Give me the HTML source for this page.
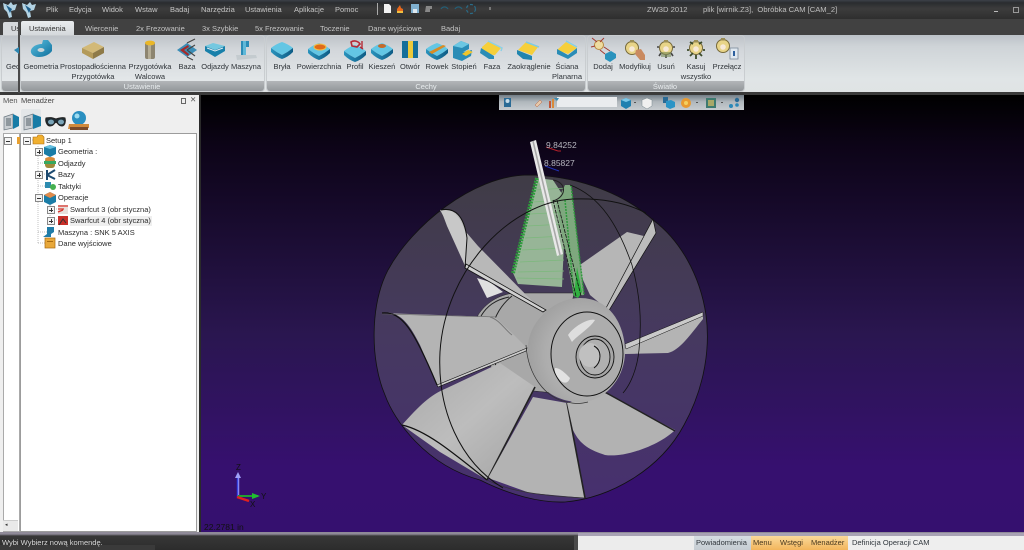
<!DOCTYPE html>
<html><head><meta charset="utf-8"><style>
html,body{margin:0;padding:0;width:1024px;height:550px;overflow:hidden;background:#2b2b2b}
#r{position:relative;width:1024px;height:550px;overflow:hidden;font-family:"Liberation Sans",sans-serif;filter:blur(.35px)}
.a{position:absolute}
.t{position:absolute;white-space:nowrap;font-size:7.5px;line-height:9.5px}
.m{color:#c4c4c4;top:5px}
.tb{color:#c2c2c2}
.c{transform:translateX(-50%);text-align:center;color:#2e3338}
.g{color:#e8ecee;top:82px;transform:translateX(-50%)}
.tr{color:#2b2b2b}
svg{position:absolute;overflow:visible}
.pn{position:absolute;top:36px;height:55px;border-radius:3px;background:linear-gradient(#bfc4c9 0,#d3d7db 25%,#e3e7e9 80%);box-shadow:0 0 0 1px #c9cdd0}
.gb{position:absolute;left:0;right:0;bottom:0;height:10px;background:linear-gradient(#b3b6b9,#93979b);border-radius:0 0 3px 3px}
.pm{position:absolute;width:6px;height:6px;border:1px solid #888;background:#f4f4f4}
.pm:before{content:"";position:absolute;left:1px;top:2.5px;width:4px;height:1px;background:#333}
.pl:after{content:"";position:absolute;left:2.5px;top:1px;width:1px;height:4px;background:#333}
</style></head><body><div id="r">

<!-- title bar -->
<div class="a" style="left:0;top:0;width:1024px;height:19px;background:linear-gradient(#3c4148 0,#2a2c2f 15%,#3c3c3c 45%,#2e2e2e 100%)"></div>
<div class="a" style="left:0;top:19px;width:1024px;height:17px;background:#414141"></div>
<svg style="left:0;top:0" width="40" height="18" viewBox="0 0 40 18">
<path d="M3 3l5 2 3-3 2 3 4-1-2 6-4 1 1 6-3 1-2-6-3-3zM22 3l5 2 3-3 2 3 4-1-2 6-4 1 1 6-3 1-2-6-3-3z" fill="#b2d3e4"/>
<path d="M6 5l6 4-2 4zM25 5l6 4-2 4z" fill="#1f5f8c"/></svg>
<div class="t m" style="left:46px">Plik</div>
<div class="t m" style="left:69px">Edycja</div>
<div class="t m" style="left:102px">Widok</div>
<div class="t m" style="left:135px">Wstaw</div>
<div class="t m" style="left:170px">Badaj</div>
<div class="t m" style="left:201px">Narzędzia</div>
<div class="t m" style="left:245px">Ustawienia</div>
<div class="t m" style="left:294px">Aplikacje</div>
<div class="t m" style="left:335px">Pomoc</div>
<svg style="left:360px;top:0" width="130" height="18" viewBox="0 0 130 18">
<rect x="17" y="3" width="1" height="12" fill="#aaa"/>
<path d="M24 4h5l2 2v7h-7z" fill="#f2f2f2"/>
<path d="M37 9l3-4 1 3 2 1v4h-6z" fill="#e8691c"/><rect x="37" y="11" width="6" height="2" fill="#f0c040"/>
<rect x="51" y="4" width="8" height="9" fill="#7fb0d0"/><rect x="53" y="9" width="4" height="4" fill="#dfe8ee"/>
<path d="M66 6h6v3h-2v3h-5z" fill="#888"/>
<path d="M81 9a4 4 0 0 1 7 0M95 9a4 4 0 0 1 7 0" stroke="#23607a" stroke-width="1.2" fill="none"/>
<circle cx="111" cy="9" r="4.5" stroke="#2a6c88" stroke-width="1.2" fill="none" stroke-dasharray="3 2"/>
<rect x="129" y="7" width="2" height="3" fill="#777"/></svg>
<div class="t" style="left:647px;top:5px;color:#bdbdbd;font-size:7.6px">ZW3D 2012</div>
<div class="t" style="left:703px;top:5px;color:#bdbdbd;font-size:7.6px">plik [wirnik.Z3],&nbsp; Obróbka CAM [CAM_2]</div>
<div class="a" style="left:994px;top:11px;width:4px;height:1px;background:#bbb"></div>
<div class="a" style="left:1013px;top:7px;width:4px;height:4px;border:1px solid #999"></div>

<!-- tabs -->
<div class="a" style="left:3px;top:22px;width:17px;height:14px;background:#d6d9dc;border-radius:2px 2px 0 0"></div>
<div class="t" style="left:11px;top:24px;color:#333">Us</div>
<div class="a" style="left:21px;top:21px;width:53px;height:15px;background:linear-gradient(#e9ecee,#d3d7da);border-radius:2px 2px 0 0"></div>
<div class="t" style="left:29px;top:24px;color:#333">Ustawienia</div>
<div class="t tb" style="left:85px;top:24px">Wiercenie</div>
<div class="t tb" style="left:136px;top:24px">2x Frezowanie</div>
<div class="t tb" style="left:202px;top:24px">3x Szybkie</div>
<div class="t tb" style="left:255px;top:24px">5x Frezowanie</div>
<div class="t tb" style="left:320px;top:24px">Toczenie</div>
<div class="t tb" style="left:368px;top:24px">Dane wyjściowe</div>
<div class="t tb" style="left:441px;top:24px">Badaj</div>

<!-- ribbon -->
<div class="a" style="left:0;top:35px;width:1024px;height:58px;background:linear-gradient(#bcc2c8 0,#cfd4d8 20%,#e0e5e6 75%,#dfe3e4 100%)"></div>
<div class="a" style="left:0;top:92px;width:1024px;height:3px;background:#3a3a3a"></div>
<div class="pn" style="left:2px;width:17px"><div class="gb"></div></div>
<div class="a" style="left:18px;top:21px;width:2px;height:72px;background:#4a4a4a"></div>
<div class="pn" style="left:21px;width:243px"><div class="gb"></div></div>
<div class="pn" style="left:267px;width:318px"><div class="gb"></div></div>
<div class="pn" style="left:588px;width:156px"><div class="gb"></div></div>
<div class="t g" style="left:142px">Ustawienie</div>
<div class="t g" style="left:426px">Cechy</div>
<div class="t g" style="left:665px">Światło</div>

<svg style="left:0;top:36px" width="760" height="30" viewBox="0 36 760 30">
<defs>
<linearGradient id="b1" x1="0" y1="0" x2="1" y2="1"><stop offset="0" stop-color="#5cc0e0"/><stop offset="1" stop-color="#0f6f9c"/></linearGradient>
<linearGradient id="b2" x1="0" y1="0" x2="1" y2="0"><stop offset="0" stop-color="#2a93bd"/><stop offset="1" stop-color="#0e5c85"/></linearGradient>
<g id="box"><path d="M-11 -2Q-6 -6 0 -8Q6 -6 11 -2Q6 2 0 5Q-6 2 -11 -2z" fill="#63c6e4"/><path d="M-11 -2Q-6 2 0 5Q6 2 11 -2V2Q6 7 0 9Q-6 7 -11 2z" fill="url(#b2)"/></g>
<g id="bulb"><circle cx="0" cy="-2" r="6.5" fill="#e8d488" stroke="#776a3a" stroke-width="1"/><circle cx="0" cy="-1" r="2.8" fill="#f7e9d8"/><rect x="-2" y="-10" width="4" height="2.5" fill="#9a8d55"/></g>
</defs>
<!-- Geo peek -->
<path d="M14 50l5-3v7z" fill="#2b86b1"/>
<!-- Geometria -->
<path d="M31 50c2-5 8-6 11-6l1-4h5l4 5v6c-3 4-8 6-13 6-5 0-9-3-8-7z" fill="url(#b1)"/><ellipse cx="41" cy="50" rx="3.5" ry="2" fill="#c9d4d8"/>
<!-- Prostopadl -->
<g transform="translate(93,50)"><path d="M-11 -2L1 -8 11 -3 0 3z" fill="#d2b978"/><path d="M-11 -2L0 3V9L-11 3z" fill="#b39a5a"/><path d="M11 -3L0 3V9L11 3z" fill="#8e7a48"/></g>
<!-- Walcowa -->
<rect x="145" y="42" width="10" height="17" rx="2" fill="#8d8570"/><rect x="148" y="43" width="3" height="16" fill="#b5ad95"/><ellipse cx="150" cy="43" rx="5" ry="2.4" fill="#eab728"/>
<!-- Baza -->
<path d="M177 50l10-7 10 7-10 7z" fill="#3b8db6"/><path d="M187 43l8-4M187 57l6 3M187 50l8-5M187 50l8 6" stroke="#444" stroke-width="1.1" fill="none"/><path d="M180 50l8-5 1 2-5 3 5 4-1 2z" fill="#a52a2a"/>
<!-- Odjazdy -->
<g transform="translate(215,49)"><path d="M-10 -3L-2 -6 10 -3 0 1z" fill="#74c8e0"/><path d="M-10 -3L0 1 10 -3V2L0 8-10 2z" fill="#1880aa"/><path d="M-8 -1L0 2 8 -1" stroke="#dfeaf0" fill="none"/></g>
<!-- Maszyna -->
<path d="M241 41h8v6h-3v9h-5z" fill="#2b8bb6"/><path d="M236 55l20 -0l1 3-20 2z" fill="#c4cbcf"/><path d="M243 41h3v14h-3z" fill="#5fb8d8"/>
<use href="#box" x="282" y="50"/>
<!-- Powierzchnia -->
<use href="#box" x="319" y="51"/><ellipse cx="320" cy="47" rx="6" ry="3" fill="#e06a18" stroke="#f0c04a"/>
<!-- Profil -->
<use href="#box" x="355" y="53"/><path d="M351 42c3-2 7-1 9 2l-3 3-5-1z" fill="none" stroke="#b52a36" stroke-width="1.6"/><path d="M362 41v7M363 49l-3-2" stroke="#b52a36" stroke-width="1.4"/>
<!-- Kieszen -->
<use href="#box" x="382" y="51"/><ellipse cx="382" cy="46" rx="4" ry="2" fill="#c56a2a"/>
<!-- Otwor -->
<rect x="402" y="41" width="16" height="17" fill="#156f9a"/><rect x="408" y="41" width="5" height="17" fill="#ecc93a"/>
<!-- Rowek -->
<use href="#box" x="437" y="51"/><path d="M429 52l14-7 3 1-14 8z" fill="#d98b22"/>
<!-- Stopien -->
<path d="M453 46l8-5 8 3v5l-6 3 9-2-1 6-9 5-9-3z" fill="#2a8cb6"/><path d="M462 54l6-4 5 2-7 4z" fill="#f0c528"/><path d="M453 46l8-5 8 3-7 4z" fill="#6cc7e3"/>
<!-- Faza -->
<path d="M482 47l7-6 12 7-6 7-13-1z" fill="#f6cf3a"/><path d="M481 48l13 8v3l-5 0-9-6z" fill="#2a8cb6"/><path d="M488 41l14 7-1 3" fill="none" stroke="#8ed0e6" stroke-width="1.5"/>
<!-- Zaokr -->
<path d="M518 50l8-8 12 5-6 8z" fill="#f6cf3a"/><path d="M517 50l15 6v4l-9-1-6-5z" fill="#2185ae"/><path d="M526 42l13 5" stroke="#7fcbe4" stroke-width="1.5"/>
<!-- Sciana -->
<path d="M557 50l9-8 11 6-9 6z" fill="#f6cf3a"/><path d="M557 49l11 6 9-7v5l-9 6-11-5z" fill="#2a8cb6"/><path d="M566 41l11 6" stroke="#84d0e6" stroke-width="1.5"/>
<!-- Dodaj -->
<circle cx="599" cy="45" r="4.5" fill="#eedca0" stroke="#b88a40"/><path d="M592 38l5 4M604 38l-4 4M591 47l4-1M600 50l5 4M604 47l6 4" stroke="#a33a30"/><path d="M605 54l6-3 5 3-6 4zM605 54l5 4v4l-5-3zM616 54l-6 4v4l6-4z" fill="#2a93bd"/>
<!-- Modyfikuj -->
<use href="#bulb" x="632" y="50"/><path d="M636 50l5-1 4 6 0 5h-5l-5-6z" fill="#c98a60"/>
<!-- Usun -->
<g transform="translate(666,50)"><use href="#bulb"/><path d="M-5 3l-2 3M5 3l2 3M-7 -3h-2M7 -3h2M0 5v3" stroke="#444" stroke-width="1.6"/><rect x="-5" y="2" width="10" height="5" fill="#7a8c5a" opacity=".6"/></g>
<!-- Kasuj -->
<g transform="translate(696,50)"><use href="#bulb"/><path d="M-6 -8l3 2M6 -8l-3 2M-7 0h-2M7 0h2M-6 6l3-3M6 6l-3-3M0 5v4" stroke="#3b4b2b" stroke-width="1.8"/></g>
<!-- Przelacz -->
<use href="#bulb" x="723" y="48"/><rect x="730" y="48" width="8" height="11" fill="#dfe8f0" stroke="#7b8a99" stroke-width=".8"/><rect x="733" y="51" width="2" height="5" fill="#2b5f9e"/>
</svg>

<div class="t c" style="left:41px;top:62px">Geometria</div>
<div class="t c" style="left:93px;top:62px">Prostopadłościenna<br>Przygotówka</div>
<div class="t c" style="left:150px;top:62px">Przygotówka<br>Walcowa</div>
<div class="t c" style="left:187px;top:62px">Baza</div>
<div class="t c" style="left:215px;top:62px">Odjazdy</div>
<div class="t c" style="left:246px;top:62px">Maszyna</div>
<div class="t" style="left:6px;top:62px;color:#2e3338;width:12px;overflow:hidden">Geo</div>
<div class="t c" style="left:282px;top:62px">Bryła</div>
<div class="t c" style="left:319px;top:62px">Powierzchnia</div>
<div class="t c" style="left:355px;top:62px">Profil</div>
<div class="t c" style="left:382px;top:62px">Kieszeń</div>
<div class="t c" style="left:410px;top:62px">Otwór</div>
<div class="t c" style="left:437px;top:62px">Rowek</div>
<div class="t c" style="left:464px;top:62px">Stopień</div>
<div class="t c" style="left:492px;top:62px">Faza</div>
<div class="t c" style="left:529px;top:62px">Zaokrąglenie</div>
<div class="t c" style="left:567px;top:62px">Ściana<br>Planarna</div>
<div class="t c" style="left:603px;top:62px">Dodaj</div>
<div class="t c" style="left:635px;top:62px">Modyfikuj</div>
<div class="t c" style="left:666px;top:62px">Usuń</div>
<div class="t c" style="left:696px;top:62px">Kasuj<br>wszystko</div>
<div class="t c" style="left:727px;top:62px">Przełącz</div>

<!-- left panel -->
<div class="a" style="left:0;top:95px;width:199px;height:438px;background:#efefef"></div>
<div class="a" style="left:199px;top:95px;width:2px;height:438px;background:#2a2a2a"></div>
<div class="t" style="left:3px;top:96px;color:#555">Men</div>
<div class="t" style="left:21px;top:96px;color:#444">Menadżer</div>
<div class="a" style="left:181px;top:98px;width:3px;height:4px;border:1px solid #666"></div>
<div class="t" style="left:190px;top:95px;color:#555">✕</div>
<div class="a" style="left:21px;top:109px;width:20px;height:24px;background:#e3e6e8;border-radius:2px 2px 0 0"></div>
<svg style="left:0;top:108px" width="100" height="26" viewBox="0 108 100 26">
<path d="M4 117l9-3v14l-9 2z" fill="#c9ced2" stroke="#6a7780" stroke-width=".7"/><path d="M6 119h5M6 121h5M6 123h5M6 125h5" stroke="#55636b" stroke-width=".9"/><path d="M13 114l6 3v9l-6 3z" fill="#187ca6"/>
<path d="M24 117l9-3v14l-9 2z" fill="#c9ced2" stroke="#6a7780" stroke-width=".7"/><path d="M26 119h5M26 121h5M26 123h5M26 125h5" stroke="#55636b" stroke-width=".9"/><path d="M33 114l8 3v9l-8 3z" fill="#187ca6"/>
<path d="M46 118c5-1 7 0 10 1 3-1 6-2 9-1 1 3 0 8-3 8-4 0-4-3-6-4-2 1-2 4-6 4-3 0-5-5-4-8z" fill="#1f2c33" stroke="#222"/>
<ellipse cx="51" cy="122" rx="3" ry="2.4" fill="#7aa4b8"/><ellipse cx="61" cy="122" rx="3" ry="2.4" fill="#7aa4b8"/>
<circle cx="79" cy="118" r="7" fill="#2a8fc0"/><circle cx="77" cy="116" r="2.5" fill="#9edcf0"/>
<path d="M69 124h20l0 4-21 1z" fill="#d08a3c"/><path d="M70 127h18v3h-18z" fill="#7a4a2a"/>
</svg>
<div class="a" style="left:3px;top:133px;width:15px;height:397px;background:#fff;border:1px solid #aaa"></div>
<div class="a" style="left:20px;top:133px;width:175px;height:397px;background:#fff;border:1px solid #9c9c9c"></div>
<div class="a" style="left:3px;top:520px;width:15px;height:10px;background:#e9e9e9;border-top:1px solid #ccc"></div>
<div class="t" style="left:5px;top:522px;font-size:5px;line-height:6px;color:#333">◂</div>

<!-- tree -->
<svg style="left:0;top:133px" width="200" height="120" viewBox="0 133 200 120">
<path d="M38 146v97M38 151h9M38 163h9M38 174h9M38 186h9M38 197h9M38 232h9M38 243h9M50 203v17M50 209h8M50 220h8M28 140h5" stroke="#aaa" stroke-width=".7" stroke-dasharray="1 1" fill="none"/>
<path d="M17 137h3v7h-3z" fill="#e8a030"/>
<path d="M33 137h4l1-2h4l2 2v7H33z" fill="#f0b030" stroke="#a86a10" stroke-width=".6"/>
<path d="M44 147l6-2 6 2v7l-6 3-6-3z" fill="#1a7ca6"/><path d="M44 147l6 2 6-2-6-2z" fill="#63bfe0"/>
<rect x="45" y="158" width="10" height="10" rx="3" fill="#a08a3a"/><rect x="44" y="161" width="12" height="3" fill="#37a860"/><ellipse cx="50" cy="159" rx="5" ry="2" fill="#d88a3a"/>
<path d="M47 170v10M47 175l8-5M47 175l8 4" stroke="#1c4a70" stroke-width="2" fill="none"/>
<rect x="45" y="182" width="6" height="6" fill="#2d8cb0"/><circle cx="53" cy="187" r="3" fill="#46b050"/>
<path d="M44 195l6-3 6 3v7l-6 3-6-3z" fill="#1a7ca6"/><path d="M44 195l6 3 6-3-6-3z" fill="#e08a4a"/>
<rect x="58" y="205" width="10" height="9" fill="#e8e0dc"/><path d="M58 206h10M58 209h6M58 212l5-2" stroke="#d8352e" stroke-width="1.3"/>
<rect x="70" y="216" width="82" height="10" fill="#efefef"/>
<rect x="58" y="216" width="10" height="9" fill="#c9302a"/><path d="M59 225l4-6 3 4" stroke="#333" fill="none"/>
<path d="M47 227h7v5l-3 2v3h-8l4-3z" fill="#1f7ca8"/>
<rect x="45" y="238" width="10" height="10" fill="#e8a83a" stroke="#a86a10" stroke-width=".7"/><rect x="47" y="241" width="6" height="1" fill="#a86a10"/>
</svg>
<div class="pm" style="left:4px;top:137px"></div>
<div class="pm" style="left:23px;top:137px"></div>
<div class="pm pl" style="left:35px;top:148px"></div>
<div class="pm pl" style="left:35px;top:171px"></div>
<div class="pm" style="left:35px;top:194px"></div>
<div class="pm pl" style="left:47px;top:206px"></div>
<div class="pm pl" style="left:47px;top:217px"></div>
<div class="t tr" style="left:46px;top:136px">Setup 1</div>
<div class="t tr" style="left:58px;top:147px">Geometria :</div>
<div class="t tr" style="left:58px;top:159px">Odjazdy</div>
<div class="t tr" style="left:58px;top:170px">Bazy</div>
<div class="t tr" style="left:58px;top:182px">Taktyki</div>
<div class="t tr" style="left:58px;top:193px">Operacje</div>
<div class="t tr" style="left:70px;top:205px">Swarfcut 3 (obr styczna)</div>
<div class="t tr" style="left:70px;top:216px">Swarfcut 4 (obr styczna)</div>
<div class="t tr" style="left:58px;top:228px">Maszyna : SNK 5 AXIS</div>
<div class="t tr" style="left:58px;top:239px">Dane wyjściowe</div>

<!-- viewport -->
<div class="a" style="left:201px;top:95px;width:823px;height:437px;background:linear-gradient(#000 0,#0d0418 12%,#2a1650 55%,#36106f 85%,#35106f 100%)"></div>
<svg style="left:0;top:0" width="1024" height="550" viewBox="0 0 1024 550">
<defs>
<linearGradient id="sil" x1="0" y1="0" x2="0" y2="1"><stop offset="0" stop-color="#403c46"/><stop offset=".5" stop-color="#463960"/><stop offset="1" stop-color="#47306f"/></linearGradient>
<linearGradient id="bl" x1="0" y1="0" x2="1" y2="1"><stop offset="0" stop-color="#a9a9a9"/><stop offset=".5" stop-color="#bdbdbd"/><stop offset="1" stop-color="#a3a3a3"/></linearGradient>
<radialGradient id="dome" cx=".6" cy=".55" r=".6"><stop offset="0" stop-color="#bcbcbc"/><stop offset=".7" stop-color="#adadad"/><stop offset="1" stop-color="#a0a0a0"/></radialGradient>
</defs>
<!-- silhouette -->
<path d="M527 175C472 176 412 226 388 270 370 305 370 360 385 395 394 420 425 465 480 480 510 495 540 503 565 502 610 498 660 470 684 425 706 385 710 345 706 315 700 275 680 240 653 220 620 190 570 175 527 175Z" fill="url(#sil)" stroke="#111" stroke-width=".8"/>
<!-- hub cylinder -->
<path d="M478 315c8-12 20-20 36-22l60 0-20 100-50-5c-15-20-30-55-26-73z" fill="#a8a8a8" stroke="#222" stroke-width=".5"/>
<path d="M481 316c6-10 14-16 28-19M512 296c-10 8-18 20-20 34M493 350l7 40" stroke="#222" fill="none"/>
<!-- right upper blade -->
<path d="M577 267L627 232 652 238 608 310 590 295z" fill="#b6b6b6"/>
<path d="M653 219L656 233 608 312 605 310z" fill="#bcbcbc" stroke="#111" stroke-width=".7"/>
<!-- right blade -->
<path d="M625 345L703 313 703 319C690 335 680 350 668 353L625 354z" fill="#b4b4b4"/>
<path d="M625 344L703 312 703 316 626 349z" fill="#cacaca" stroke="#111" stroke-width=".5"/>
<!-- top-left blade -->
<path d="M477 278L487 298 503 292 490 282z" fill="#e0e0e0"/>
<path d="M440 210C452 208 462 212 466 232L478 246 543 312 465 268 462 250z" fill="#b8b8b8"/>
<path d="M441 210C452 208 460 214 467 237L466 268 447 226z" fill="#c8c8c8"/>
<path d="M441 210C455 207 464 216 467 238L465 268" stroke="#111" stroke-width="1" fill="none"/>
<path d="M465 268L543 312 546 310 466 264z" stroke="#111" stroke-width=".8" fill="#d0d0d0"/>
<!-- green toolpath blade -->
<path d="M537 178L513 273 518 284 562 287 566 200 553 180z" fill="#97b597"/>
<path d="M520 262l44-2M522 250l43-2M525 238l41-2M527 226l39-2M530 214l37-2M533 202l34-2M535 190l32-2M518 272l46-1M517 278l47 1" stroke="#7cb87c" stroke-width=".8"/>
<path d="M537 178L513 273" stroke="#2e9a3c" stroke-width="4" stroke-dasharray="2 1"/>
<path d="M565 185L571 185 584 295 574 296 556 204Z" fill="#7ea87e"/>
<path d="M571 185L584 295M565 200L574 296" stroke="#2e9a3c" stroke-width="1.500" stroke-dasharray="2 1" fill="none"/>
<path d="M577 267L574 296 578 298 582 292 577 267Z" fill="#30b040"/>
<path d="M553 180C566 182 568 196 553 201" stroke="#222" fill="none"/>
<path d="M553 200L576 296M557 200L581 296" stroke="#111" stroke-width=".8" stroke-dasharray="4 1"/>
<!-- tool -->
<path d="M530 142L536 140 563 254 557 256z" fill="#e8e8e8"/><path d="M533 141L560 255" stroke="#a8a8a8" stroke-width="1.6"/>
<!-- left blade -->
<path d="M382 313C400 310 410 325 420 345L437 385 527 348 512 333 495 317z" fill="#b4b4b4"/>
<path d="M382 313C402 311 414 330 437 385" stroke="#111" stroke-width="1.2" fill="none"/>
<path d="M437 385L527 348 526 351 438 387z" fill="#ccc" stroke="#111" stroke-width=".6"/>
<path d="M382 314L495 317" stroke="#555" stroke-width=".5"/>
<path d="M490 317C500 320 505 330 512 335" stroke="#777" fill="none"/>
<!-- lower left big blade -->
<path d="M402 425C420 405 430 395 447 388L500 363 535 387 487 480 440 452z" fill="url(#bl)"/>
<path d="M402 425C425 430 450 450 487 480" stroke="#111" stroke-width="1.3" fill="none"/>
<path d="M535 387L487 480" stroke="#222" stroke-width="1.6"/>
<!-- bottom blade -->
<path d="M533 397L567 403 585 498 530 493 488 478z" fill="#b3b3b3"/>
<path d="M567 403L585 498" stroke="#222" stroke-width="1.6"/>
<path d="M487 480C510 492 545 496 585 498" stroke="#333" stroke-width=".7" fill="none"/>
<!-- lower right blade -->
<path d="M567 403L603 392 675 430C660 445 625 458 605 455 590 450 580 445 573 430z" fill="#b2b2b2"/>
<path d="M603 391L675 431" stroke="#222" stroke-width="1.4"/>
<!-- dome -->
<path d="M528 345C530 320 555 298 580 298 610 298 625 325 625 352 625 378 605 402 580 402 548 402 526 378 528 345Z" fill="url(#dome)"/>
<path d="M526 345C528 375 545 398 567 402 575 404 580 404 588 402" stroke="#333" stroke-width=".7" fill="none"/>
<ellipse cx="587" cy="354" rx="36" ry="42" fill="#adadad" stroke="#111" stroke-width="1"/>
<path d="M568 335C575 325 590 318 595 320 590 328 578 335 572 342Z" fill="#dedede"/>
<path d="M555 372C560 385 568 385 570 378 564 372 560 368 555 368Z" fill="#e2e2e2"/>
<ellipse cx="595" cy="357" rx="19" ry="21" fill="#a6a6a6" stroke="#111" stroke-width=".9"/>
<ellipse cx="595" cy="357" rx="15" ry="18" fill="#b0b0b0" stroke="#111" stroke-width=".9"/>
<ellipse cx="590" cy="355" rx="11" ry="12" fill="#c0c0c0"/>
<path d="M594 346C602 350 602 362 594 368" stroke="#111" fill="none"/>
<!-- wire arcs -->
<path d="M503 488C460 462 437 410 440 352 445 270 510 202 573 199 600 198 625 202 646 213" stroke="#111" stroke-width="1" fill="none"/>
<path d="M570 185C600 196 618 225 632 265 640 295 642 320 639 350 637 370 630 385 623 393" stroke="#111" stroke-width=".8" fill="none"/>
<!-- dimension labels -->
<path d="M546 147l12 4 3 0" stroke="#b5202a" stroke-width="1" fill="none"/>
<path d="M545 166l14 5" stroke="#2030b0" stroke-width="1" fill="none"/>
<text x="546" y="148" font-family="Liberation Sans" font-size="8.5" fill="#b8b8c0">9.84252</text>
<text x="544" y="166" font-family="Liberation Sans" font-size="8.5" fill="#b8b8c0">8.85827</text>
<!-- triad -->
<path d="M237.500 497V474" stroke="#2030e0" stroke-width="1.5"/><path d="M238.500 496V478" stroke="#8888f0" stroke-width="1.500"/><path d="M235 478l3-6 3 6z" fill="#a0a0f8"/>
<path d="M238 496l20 0" stroke="#20a030" stroke-width="2"/><path d="M252 493l8 3-8 3z" fill="#20c030"/>
<path d="M237 497l12 4" stroke="#e02020" stroke-width="2.500"/>
<text x="236" y="470" font-family="Liberation Sans" font-size="8" fill="#111">Z</text>
<text x="261" y="499" font-family="Liberation Sans" font-size="8" fill="#111">Y</text>
<text x="250" y="507" font-family="Liberation Sans" font-size="8" fill="#111">X</text>
<text x="204" y="530" font-family="Liberation Sans" font-size="8.500" fill="#111">22.2781 in</text>
</svg>

<!-- floating toolbar -->
<div class="a" style="left:499px;top:95px;width:245px;height:15px;background:linear-gradient(#727d86,#b0b7bc 45%,#c7ccd0)"></div>
<div class="a" style="left:557px;top:97px;width:60px;height:10px;background:#eaecee"></div>
<svg style="left:499px;top:95px" width="245" height="15" viewBox="0 0 245 15">
<rect x="5" y="3" width="7" height="9" fill="#2a6a95"/><circle cx="8.500" cy="6" r="2" fill="#c6dbe8"/>
<path d="M36 10l5-5 2 2-5 5z" fill="#e6c8a8" stroke="#b8664a" stroke-width=".5"/>
<rect x="50" y="6" width="2" height="7" fill="#c0563a"/><rect x="53" y="4" width="2" height="9" fill="#d88a3a"/><path d="M55 3h5l-2 3z" fill="#3a8cb0"/>
<path d="M122 5l5-2 5 2v6l-5 3-5-3z" fill="#1f80b0"/><path d="M122 5l5 2 5-2-5-2z" fill="#7cc8e8"/><rect x="135" y="7" width="2" height="1" fill="#555"/>
<path d="M143 5l5-2 5 2v6l-5 3-5-3z" fill="#f0f0f0" stroke="#7a8a90" stroke-width=".5"/>
<rect x="164" y="2" width="5" height="6" fill="#2a6a95"/><path d="M167 6l5-1 4 2v5l-5 2-4-2z" fill="#2b94c6"/>
<circle cx="187" cy="8" r="5" fill="#e89a30"/><circle cx="187" cy="8" r="2" fill="#f4d060"/><rect x="197" y="7" width="2" height="1" fill="#555"/>
<rect x="207" y="3" width="10" height="10" fill="#3e7a70"/><rect x="209" y="5" width="6" height="6" fill="#a8a868"/><rect x="222" y="7" width="2" height="1" fill="#555"/>
<circle cx="232" cy="11" r="2" fill="#2a88b8"/><circle cx="238" cy="5" r="2.200" fill="#2a6a95"/><circle cx="238" cy="10" r="1.800" fill="#2a88b8"/>
</svg>

<!-- status bar -->
<div class="a" style="left:0;top:532px;width:1024px;height:18px;background:linear-gradient(#8f8a98 0,#8f8a98 2px,#373737 4px,#2c2c2c)"></div>
<div class="a" style="left:0;top:545px;width:155px;height:5px;background:#3a3a3a"></div>
<div class="t" style="left:2px;top:538px;color:#d8d8d8">Wybi Wybierz nową komendę.</div>
<div class="a" style="left:574px;top:536px;width:4px;height:14px;background:#4a4a4a"></div>
<div class="a" style="left:578px;top:533px;width:446px;height:3px;background:#a8a2b4"></div>
<div class="a" style="left:578px;top:536px;width:116px;height:14px;background:#ececec"></div>
<div class="a" style="left:694px;top:536px;width:57px;height:14px;background:linear-gradient(#d6dde2,#c5ccd2)"></div>
<div class="a" style="left:751px;top:536px;width:97px;height:14px;background:linear-gradient(#fbd99a,#f2b55c)"></div>
<div class="a" style="left:848px;top:536px;width:176px;height:14px;background:#eeeeee"></div>
<div class="t" style="left:696px;top:538px;color:#30363c">Powiadomienia</div>
<div class="t" style="left:753px;top:538px;color:#4a3a20">Menu</div>
<div class="t" style="left:780px;top:538px;color:#4a3a20">Wstęgi</div>
<div class="t" style="left:811px;top:538px;color:#4a3a20">Menadżer</div>
<div class="t" style="left:852px;top:538px;color:#30363c">Definicja Operacji CAM</div>
</div></body></html>
